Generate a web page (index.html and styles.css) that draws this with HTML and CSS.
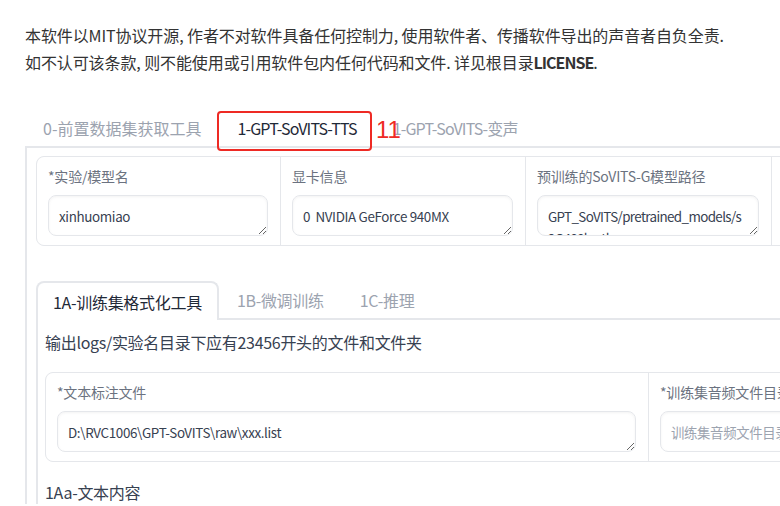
FILE: index.html
```html
<!DOCTYPE html>
<html>
<head>
  <title>GPT-SoVITS WebUI</title>
  <link rel="stylesheet" href="styles.css">
</head>
<body>

<div class="page">

  <div class="prose">
    本软件以MIT协议开源, 作者不对软件具备任何控制力, 使用软件者、传播软件导出的声音者自负全责.<br>
    如不认可该条款, 则不能使用或引用软件包内任何代码和文件. 详见根目录<b>LICENSE</b>.
  </div>

  <!-- top level tabs -->
  <div class="tabs">
    <div class="tab-nav">
      <button>0-前置数据集获取工具</button>
      <button class="selected lat">1-GPT-SoVITS-TTS</button>
      <button class="lat">1-GPT-SoVITS-变声</button>
    </div>

    <div class="tabitem">
      <div class="box grid4">
        <div class="col">
          <label>*实验/模型名</label>
          <textarea rows="1">xinhuomiao</textarea>
        </div>
        <div class="col">
          <label>显卡信息</label>
          <textarea rows="1">0  NVIDIA GeForce 940MX</textarea>
        </div>
        <div class="col">
          <label>预训练的SoVITS-G模型路径</label>
          <textarea rows="1" class="wrap">GPT_SoVITS/pretrained_models/s2G488k.pth</textarea>
        </div>
        <div class="col">
          <label>预训练的SoVITS-D模型路径</label>
          <textarea rows="1" class="wrap">GPT_SoVITS/pretrained_models/s2D488k.pth</textarea>
        </div>
      </div>

      <!-- sub tabs -->
      <div class="tabs sub">
        <div class="tab-nav">
          <button class="selected">1A-训练集格式化工具</button>
          <button>1B-微调训练</button>
          <button>1C-推理</button>
        </div>
        <div class="tabitem">
          <p class="note">输出logs/实验名目录下应有23456开头的文件和文件夹</p>
          <div class="box grid2">
            <div class="col">
              <label>*文本标注文件</label>
              <textarea rows="1">D:\RVC1006\GPT-SoVITS\raw\xxx.list</textarea>
            </div>
            <div class="col">
              <label>*训练集音频文件目录</label>
              <textarea rows="1" placeholder="训练集音频文件目录 拼接 list文件里波形对应的文件名"></textarea>
            </div>
          </div>
          <p class="note">1Aa-文本内容</p>
        </div>
      </div>
    </div>
  </div>

  <!-- annotation drawn over the screenshot -->
  <div class="mark"></div>
  <span class="mark-num">11</span>
</div>

</body>
</html>
```

FILE: styles.css
```css
body { margin: 0; background: white; overflow: hidden; font-family: "Noto Sans CJK SC", "Noto Sans", sans-serif; }
.page { position: relative; width: 1200px; padding: 22px 0 0 25px; }

.prose { font-size: 16px; line-height: 27px; color: #333; letter-spacing: -0.1px; }
.prose b { font-weight: 700; letter-spacing: -1px; }

.tabs { margin-top: 34px; }
.tab-nav { display: flex; height: 36px; border-bottom: 2px solid #e5e7eb; }
.tab-nav button { font: inherit; font-size: 16px; color: #9ca3af; background: none; border: none; padding: 0 18px; height: 36px; cursor: pointer; }
.tab-nav button.lat { letter-spacing: -0.85px; }
.tab-nav button.selected { color: #1f2937; background: white; }
.tabitem { border-left: 2px solid #e5e7eb; padding: 8px 0 0 9px; }

.sub { margin-top: 35px; }
.sub .tab-nav { height: 37px; }
.sub .tab-nav button { height: 37px; padding: 0 18px; letter-spacing: -0.3px; }
.sub .tab-nav button.selected { border: 2px solid #e5e7eb; border-bottom: none; border-radius: 8px 8px 0 0; height: 39px; margin-bottom: -2px; padding: 0 15px; }
.sub .tabitem { padding: 10px 0 0 7px; }

.box { border: 1px solid #e5e7eb; border-radius: 8px; overflow: hidden; display: grid; gap: 1px; background: #e5e7eb; }
.grid4 { grid-template-columns: 243px 244px 245px 245px; }
.grid2 { grid-template-columns: 602px 602px; margin: 18px 0; }
.col { background: white; padding: 9px 12px 9px 11px; display: flex; flex-direction: column; }
.col label { font-size: 14px; line-height: 20px; color: #6b7280; margin-bottom: 9px; letter-spacing: -0.2px; }
.col textarea { font: inherit; font-size: 13.4px; letter-spacing: -0.35px; line-height: 22px; color: #374151; height: 41px; box-sizing: border-box; padding: 9px 10px; border: 1px solid #e5e7eb; border-radius: 8px; box-shadow: inset 0 1px 3px rgba(0,0,0,0.05); overflow: hidden; resize: vertical; outline: none; white-space: pre; }
.col textarea.wrap { white-space: pre-wrap; word-break: break-all; letter-spacing: -0.62px; }
.col textarea::placeholder { color: #9ca3af; }

.note { margin: 0; font-size: 16px; line-height: 24px; color: #374151; letter-spacing: -0.3px; }

.mark { position: absolute; left: 217px; top: 111px; width: 151px; height: 36px; border: 2px solid #ee2a24; border-radius: 4px; }
.mark-num { position: absolute; left: 376px; top: 114px; font-family: "Liberation Sans", Arial, sans-serif; font-size: 24px; line-height: 32px; color: #ee2a24; }
```
